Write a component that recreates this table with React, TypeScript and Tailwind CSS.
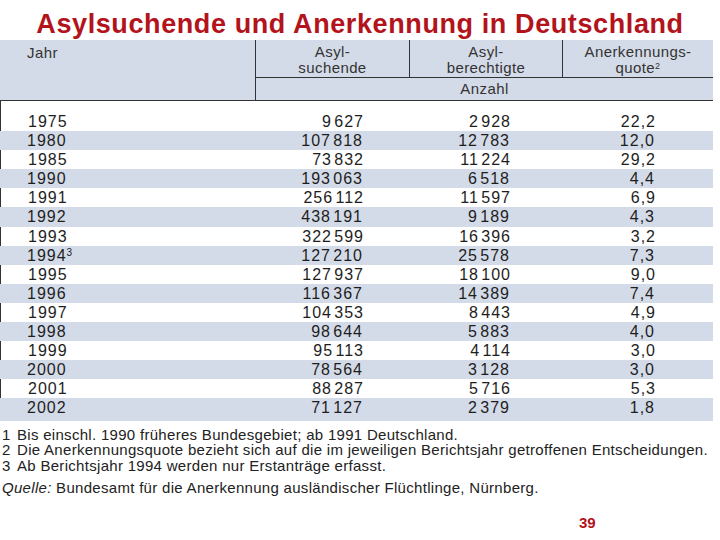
import React from 'react'

type Row = { year: string; sup?: string; suchende: string; berechtigte: string; quote: string }

const rows: Row[] = [
  { year: '1975', suchende: '9\u200a627', berechtigte: '2\u200a928', quote: '22,2' },
  { year: '1980', suchende: '107\u200a818', berechtigte: '12\u200a783', quote: '12,0' },
  { year: '1985', suchende: '73\u200a832', berechtigte: '11\u200a224', quote: '29,2' },
  { year: '1990', suchende: '193\u200a063', berechtigte: '6\u200a518', quote: '4,4' },
  { year: '1991', suchende: '256\u200a112', berechtigte: '11\u200a597', quote: '6,9' },
  { year: '1992', suchende: '438\u200a191', berechtigte: '9\u200a189', quote: '4,3' },
  { year: '1993', suchende: '322\u200a599', berechtigte: '16\u200a396', quote: '3,2' },
  { year: '1994', sup: '3', suchende: '127\u200a210', berechtigte: '25\u200a578', quote: '7,3' },
  { year: '1995', suchende: '127\u200a937', berechtigte: '18\u200a100', quote: '9,0' },
  { year: '1996', suchende: '116\u200a367', berechtigte: '14\u200a389', quote: '7,4' },
  { year: '1997', suchende: '104\u200a353', berechtigte: '8\u200a443', quote: '4,9' },
  { year: '1998', suchende: '98\u200a644', berechtigte: '5\u200a883', quote: '4,0' },
  { year: '1999', suchende: '95\u200a113', berechtigte: '4\u200a114', quote: '3,0' },
  { year: '2000', suchende: '78\u200a564', berechtigte: '3\u200a128', quote: '3,0' },
  { year: '2001', suchende: '88\u200a287', berechtigte: '5\u200a716', quote: '5,3' },
  { year: '2002', suchende: '71\u200a127', berechtigte: '2\u200a379', quote: '1,8' },
]

export default function App() {
  return (
    <div className="w-[720px] h-[540px] bg-white text-[#222] font-['Liberation_Sans',Arial,sans-serif] overflow-hidden">
      {/* Title */}
      <div className="relative z-10 h-[40px] pt-[10px] text-center text-[27px] leading-[28px] tracking-[0.6px] font-bold text-[#b3131b]">
        Asylsuchende und Anerkennung in Deutschland
      </div>

      {/* Header */}
      <div className="w-[713px] h-[61px] bg-[#d4dbe8] grid grid-cols-[255px_1fr] border-b border-[#333] text-[15px] leading-[16px] tracking-[0.4px] text-[#333]">
        <div className="pl-[27px] pt-[5px]">Jahr</div>
        <div className="border-l border-[#333] flex flex-col">
          <div className="h-[38px] grid grid-cols-[153px_153px_1fr] border-b border-[#333]">
            <div className="text-center pt-[4px]">Asyl-<br />suchende</div>
            <div className="text-center pt-[4px] border-l border-[#333]">Asyl-<br />berechtigte</div>
            <div className="text-center pt-[4px] border-l border-[#333]">
              Anerkennungs-<br />quote<sup className="text-[9px]">2</sup>
            </div>
          </div>
          <div className="flex-1 flex items-center justify-center">Anzahl</div>
        </div>
      </div>

      {/* Body */}
      <div className="w-[713px] text-[16px] leading-[19.1px] tracking-[1px] text-[#1e1e1e]">
        {rows.map((r, i) => {
          const blue = i % 2 === 1
          const first = i === 0
          const last = i === rows.length - 1
          return (
            <div
              key={r.year}
              className={
                'grid grid-cols-[255px_108px_147px_145px_1fr] ' +
                (blue ? 'bg-[#d4dbe8] ' : 'border-l-[1.5px] border-[#333] ') +
                (first ? 'pt-[11px] ' : '') +
                (last ? 'pb-[3px] ' : '')
              }
            >
              <div className="pl-[27px]">
                {r.year}
                {r.sup && <sup className="text-[10px] tracking-normal">{r.sup}</sup>}
              </div>
              <div className="text-right">{r.suchende}</div>
              <div className="text-right">{r.berechtigte}</div>
              <div className="text-right">{r.quote}</div>
              <div />
            </div>
          )
        })}
      </div>

      {/* Footnotes */}
      <div className="pt-[6px] pl-[2px] text-[15px] leading-[15.7px] tracking-[0.3px] text-[#222]">
        <div className="flex"><span className="w-[15px]">1</span><span>Bis einschl. 1990 früheres Bundesgebiet; ab 1991 Deutschland.</span></div>
        <div className="flex"><span className="w-[15px]">2</span><span>Die Anerkennungsquote bezieht sich auf die im jeweiligen Berichtsjahr getroffenen Entscheidungen.</span></div>
        <div className="flex"><span className="w-[15px]">3</span><span>Ab Berichtsjahr 1994 werden nur Erstanträge erfasst.</span></div>
        <div className="mt-[6px]"><i>Quelle:</i> Bundesamt für die Anerkennung ausländischer Flüchtlinge, Nürnberg.</div>
      </div>

      {/* Page number */}
      <div className="mt-[17px] pl-[579px] text-[15px] font-bold text-[#b3131b]">39</div>
    </div>
  )
}
